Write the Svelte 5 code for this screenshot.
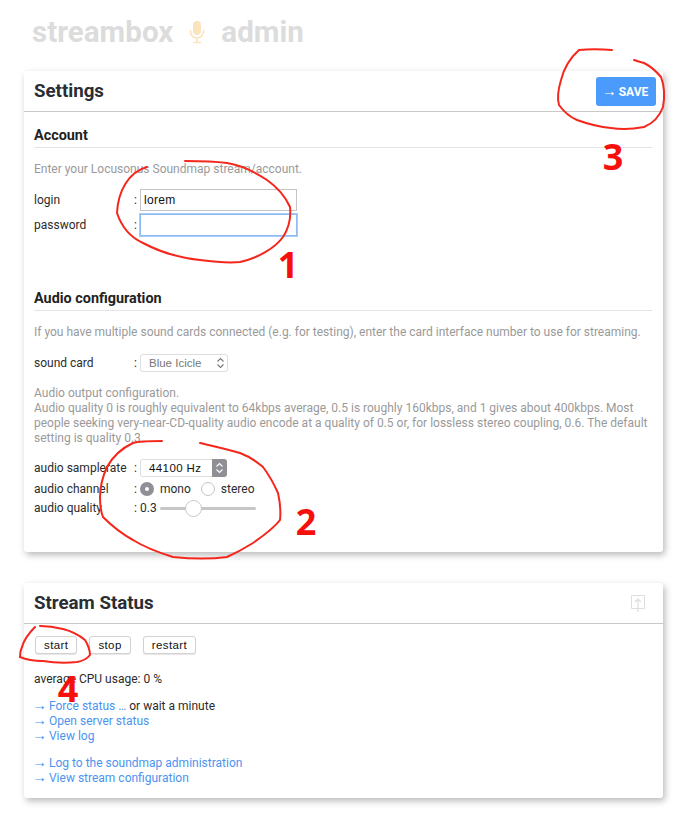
<script>
  const notes = [
    'M147 167 C128 172 118 192 117 213 C122 228 132 238 143 243 C160 252 180 258 200 260 C215 262 230 263 240 262 C258 258 275 248 283 237 C290 226 291 216 290 207 C285 196 277 187 267 180 C255 172 240 165 227 163 C212 161 198 161 185 161',
    'M162 441 C150 441 140 441 133 443 C120 449 112 458 107 467 C102 478 100 488 100 497 C100 505 101 512 103 517 C112 526 122 534 133 540 C146 548 160 553 173 557 C192 559 212 559 227 557 C236 553 245 548 253 543 C263 536 274 528 280 520 C281 511 280 502 278 493 C274 484 269 475 263 467 C256 461 248 456 240 453 C227 449 213 446 200 443',
    'M612 50 C600 49 589 49 579 50 C570 58 564 68 561 80 C558 90 557 98 559 105 C564 112 570 117 577 120 C588 124 600 127 611 128 C623 130 634 129 644 127 C654 123 660 115 663 107 C665 96 664 85 661 77 C656 71 650 66 644 63 C640 62 637 61 634 60',
    'M35 627 C28 634 24 640 22 647 C20 651 20 654 20 657 C27 660 35 661 43 661 C55 663 67 663 77 662 C83 661 87 659 90 655 C90 650 88 645 85 640 C79 635 71 631 63 629 C55 627 47 626 40 626'
  ];

  const numbers = [
    { n: '1', x: 288, y: 278 },
    { n: '2', x: 306, y: 535 },
    { n: '3', x: 613, y: 170 },
    { n: '4', x: 68, y: 702 }
  ];
</script>

<div class="page">
  <header class="brand">
    <span>streambox</span>
    <svg class="mic" width="16" height="24" viewBox="0 0 16 24" aria-hidden="true">
      <rect x="4" y="1" width="8" height="14" rx="4" fill="#fbe3bd" />
      <path d="M1.5 10 V11.5 a6.5 6.5 0 0 0 13 0 V10 M8 18 V22 M4 22.5 H12" fill="none" stroke="#fbe3bd" stroke-width="1.6" />
    </svg>
    <span>admin</span>
  </header>

  <section class="card settings">
    <div class="card-head">
      <h2>Settings</h2>
      <button class="save"><span class="arrow">→</span> SAVE</button>
    </div>
    <div class="card-body">
      <h3>Account</h3>
      <p class="help first">Enter your Locusonus Soundmap stream/account.</p>
      <div class="rows account">
        <div class="row">
          <span class="label">login</span><span class="colon">:</span>
          <input class="field" value="lorem" />
        </div>
        <div class="row">
          <span class="label">password</span><span class="colon">:</span>
          <input class="field focused" />
        </div>
      </div>

      <h3 class="audio">Audio configuration</h3>
      <p class="help first">If you have multiple sound cards connected (e.g. for testing), enter the card interface number to use for streaming.</p>
      <div class="row card-row">
        <span class="label">sound card</span><span class="colon">:</span>
        <div class="select idle">
          <span>Blue Icicle</span>
          <svg width="9" height="12" viewBox="0 0 9 12" aria-hidden="true"><path d="M1.5 4.5 L4.5 1.5 L7.5 4.5 M1.5 7.5 L4.5 10.5 L7.5 7.5" fill="none" stroke="#777" stroke-width="1.1" /></svg>
        </div>
      </div>
      <p class="help output">Audio output configuration.<br />Audio quality 0 is roughly equivalent to 64kbps average, 0.5 is roughly 160kbps, and 1 gives about 400kbps. Most people seeking very-near-CD-quality audio encode at a quality of 0.5 or, for lossless stereo coupling, 0.6. The default setting is quality 0.3</p>
      <div class="rows audio-rows">
        <div class="row">
          <span class="label">audio samplerate</span><span class="colon">:</span>
          <div class="select active">
            <span>44100 Hz</span>
            <div class="stepper">
              <svg width="9" height="12" viewBox="0 0 9 12" aria-hidden="true"><path d="M1.5 4.5 L4.5 1.5 L7.5 4.5 M1.5 7.5 L4.5 10.5 L7.5 7.5" fill="none" stroke="#fff" stroke-width="1.1" /></svg>
            </div>
          </div>
        </div>
        <div class="row">
          <span class="label">audio channel</span><span class="colon">:</span>
          <div class="radios">
            <span class="radio on"></span><span class="opt">mono</span>
            <span class="radio"></span><span class="opt">stereo</span>
          </div>
        </div>
        <div class="row">
          <span class="label">audio quality</span><span class="colon">:</span>
          <span class="value">0.3</span>
          <div class="slider"><span class="thumb"></span></div>
        </div>
      </div>
    </div>
  </section>

  <section class="card status">
    <div class="card-head">
      <h2>Stream Status</h2>
      <svg class="upload" width="14" height="17" viewBox="0 0 14 17" aria-hidden="true">
        <path d="M.5 .5 H13.5 V13.5 H.5 Z" fill="none" stroke="#dedede" />
        <path d="M7 17 V4 M4 7 L7 4 L10 7" fill="none" stroke="#dedede" stroke-width="1.2" />
      </svg>
    </div>
    <div class="card-body">
      <div class="buttons">
        <button class="small">start</button>
        <button class="small">stop</button>
        <button class="small">restart</button>
      </div>
      <p class="cpu">average CPU usage: 0 %</p>
      <ul class="links">
        <li><a href="#force"><span class="arrow">→</span> Force status …</a> or wait a minute</li>
        <li><a href="#server"><span class="arrow">→</span> Open server status</a></li>
        <li><a href="#log"><span class="arrow">→</span> View log</a></li>
      </ul>
      <ul class="links last">
        <li><a href="#admin"><span class="arrow">→</span> Log to the soundmap administration</a></li>
        <li><a href="#config"><span class="arrow">→</span> View stream configuration</a></li>
      </ul>
    </div>
  </section>

  <!-- red pen marks drawn over the screenshot -->
  <svg class="notes" width="688" height="819" viewBox="0 0 688 819" aria-hidden="true">
    {#each notes as d}
      <path {d} fill="none" stroke="#f5261c" stroke-width="2" stroke-linecap="round" />
    {/each}
    {#each numbers as num}
      <text x={num.x} y={num.y} text-anchor="middle" class="num">{num.n}</text>
    {/each}
  </svg>
</div>

<style>
  :global(body) {
    margin: 0;
    background: #fff;
  }

  .page {
    position: relative;
    width: 688px;
    height: 819px;
    overflow: hidden;
    box-sizing: border-box;
    padding: 14px 25px 0 24px;
    font-family: Roboto, "Liberation Sans", sans-serif;
    font-size: 12px;
    line-height: 15px;
    color: #2b2b2b;
  }

  .arrow {
    margin-left: -2px;
    font-family: "Liberation Sans", sans-serif;
    font-size: 15px;
    line-height: 1;
    letter-spacing: -1px;
  }

  .brand {
    display: flex;
    align-items: center;
    gap: 14px;
    height: 36px;
    padding-left: 8px;
    font-size: 29.6px;
    font-weight: 700;
    color: #dcdcdc;
  }

  .mic {
    margin: 0 2px;
  }

  .card {
    background: #fff;
    border-radius: 3px;
    box-shadow: 2px 3px 7px rgba(0, 0, 0, 0.28);
  }

  .settings {
    margin-top: 21px;
    height: 481px;
  }

  .status {
    margin-top: 31px;
    height: 215px;
  }

  .card-head {
    display: flex;
    align-items: center;
    justify-content: space-between;
    box-sizing: border-box;
    height: 41px;
    padding: 0 7px 0 10px;
    border-bottom: 1px solid #c8c8c8;
  }

  .upload {
    margin-right: 11px;
    margin-top: 1px;
  }

  .card-body {
    padding: 0 11px 0 10px;
  }

  h2 {
    margin: 0;
    font-size: 18.7px;
    font-weight: 700;
    color: #2a2d33;
  }

  h3 {
    margin: 0;
    padding: 16px 0 4px;
    height: 15px;
    line-height: 15px;
    font-size: 14.4px;
    font-weight: 700;
    color: #222;
    border-bottom: 1px solid #e4e4e4;
  }

  h3.audio {
    padding-top: 0;
    margin-top: 55px;
  }

  .help {
    margin: 0;
    color: #9a9a9a;
  }

  .help.first {
    margin-top: 14px;
  }

  .help.output {
    margin-top: 14px;
  }

  .save {
    width: 60px;
    height: 29px;
    padding: 0;
    border: 0;
    border-radius: 3px;
    background: #4a9bfb;
    color: #fff;
    font: 700 12px Roboto, sans-serif;
  }

  .rows {
    display: flex;
    flex-direction: column;
  }

  .row {
    display: flex;
    align-items: center;
  }

  .label {
    width: 100px;
  }

  .colon {
    width: 6px;
  }

  .account {
    margin-top: 12px;
    gap: 3px;
  }

  .field {
    box-sizing: border-box;
    width: 157px;
    height: 22px;
    margin: 0;
    padding: 0 3px;
    border: 1px solid #c4c4c4;
    outline: none;
    font: 12px "Liberation Sans", sans-serif;
    letter-spacing: 0.3px;
    color: #111;
  }

  .field.focused {
    border: 1px solid #8fbdf3;
    box-shadow: 0 0 0 1px #a6ccf6;
  }

  .card-row {
    margin-top: 14px;
  }

  .select {
    display: flex;
    align-items: center;
    justify-content: space-between;
    box-sizing: border-box;
    height: 18px;
    border: 1px solid #dedede;
    border-radius: 3px;
    padding-left: 8px;
    font-family: "Liberation Sans", sans-serif;
    font-size: 11.5px;
    letter-spacing: 0.4px;
  }

  .select.idle {
    width: 88px;
    padding-right: 2px;
    letter-spacing: 0;
    color: #777;
  }

  .select.active {
    width: 87px;
    color: #111;
  }

  .stepper {
    display: flex;
    align-items: center;
    justify-content: center;
    width: 15px;
    height: 18px;
    margin-right: -1px;
    border-radius: 0 3px 3px 0;
    background: #8f8f96;
  }

  .audio-rows {
    margin-top: 13px;
    gap: 4px;
  }

  .radios {
    display: flex;
    align-items: center;
    height: 16px;
  }

  .radio {
    box-sizing: border-box;
    width: 14px;
    height: 14px;
    border: 1px solid #c4c4c4;
    border-radius: 50%;
    background: #fff;
  }

  .radio.on {
    border: 5px solid #8f8f96;
    background: #fff;
  }

  .opt {
    margin: 0 10px 0 6px;
  }

  .value {
    width: 20px;
  }

  .slider {
    position: relative;
    width: 96px;
    height: 3px;
    border-radius: 2px;
    background: #c6c6c6;
  }

  .thumb {
    position: absolute;
    top: -7px;
    left: 25px;
    box-sizing: border-box;
    width: 17px;
    height: 17px;
    border: 1px solid #c8c8c8;
    border-radius: 50%;
    background: #fff;
  }

  .buttons {
    display: flex;
    gap: 12px;
    margin-top: 12px;
    padding-left: 1px;
  }

  .small {
    box-sizing: border-box;
    height: 18px;
    padding: 0 8px;
    border: 1px solid #d2d2d2;
    border-radius: 3px;
    background: #fff;
    box-shadow: 0 1px 1px rgba(0, 0, 0, 0.1);
    font: 11.5px "Liberation Sans", sans-serif;
    letter-spacing: 0.4px;
    color: #111;
  }

  .cpu {
    margin: 18px 0 0;
  }

  .links {
    margin: 10px 0 0;
    padding: 0;
    list-style: none;
  }

  .links li {
    height: 15px;
  }

  .links.last {
    margin-top: 12px;
  }

  a {
    color: #4a94f0;
    text-decoration: none;
  }

  .notes {
    position: absolute;
    top: 0;
    left: 0;
    pointer-events: none;
  }

  .num {
    fill: #f5100c;
    font-family: "Open Sans", sans-serif;
    font-weight: 700;
    font-size: 36px;
  }
</style>
